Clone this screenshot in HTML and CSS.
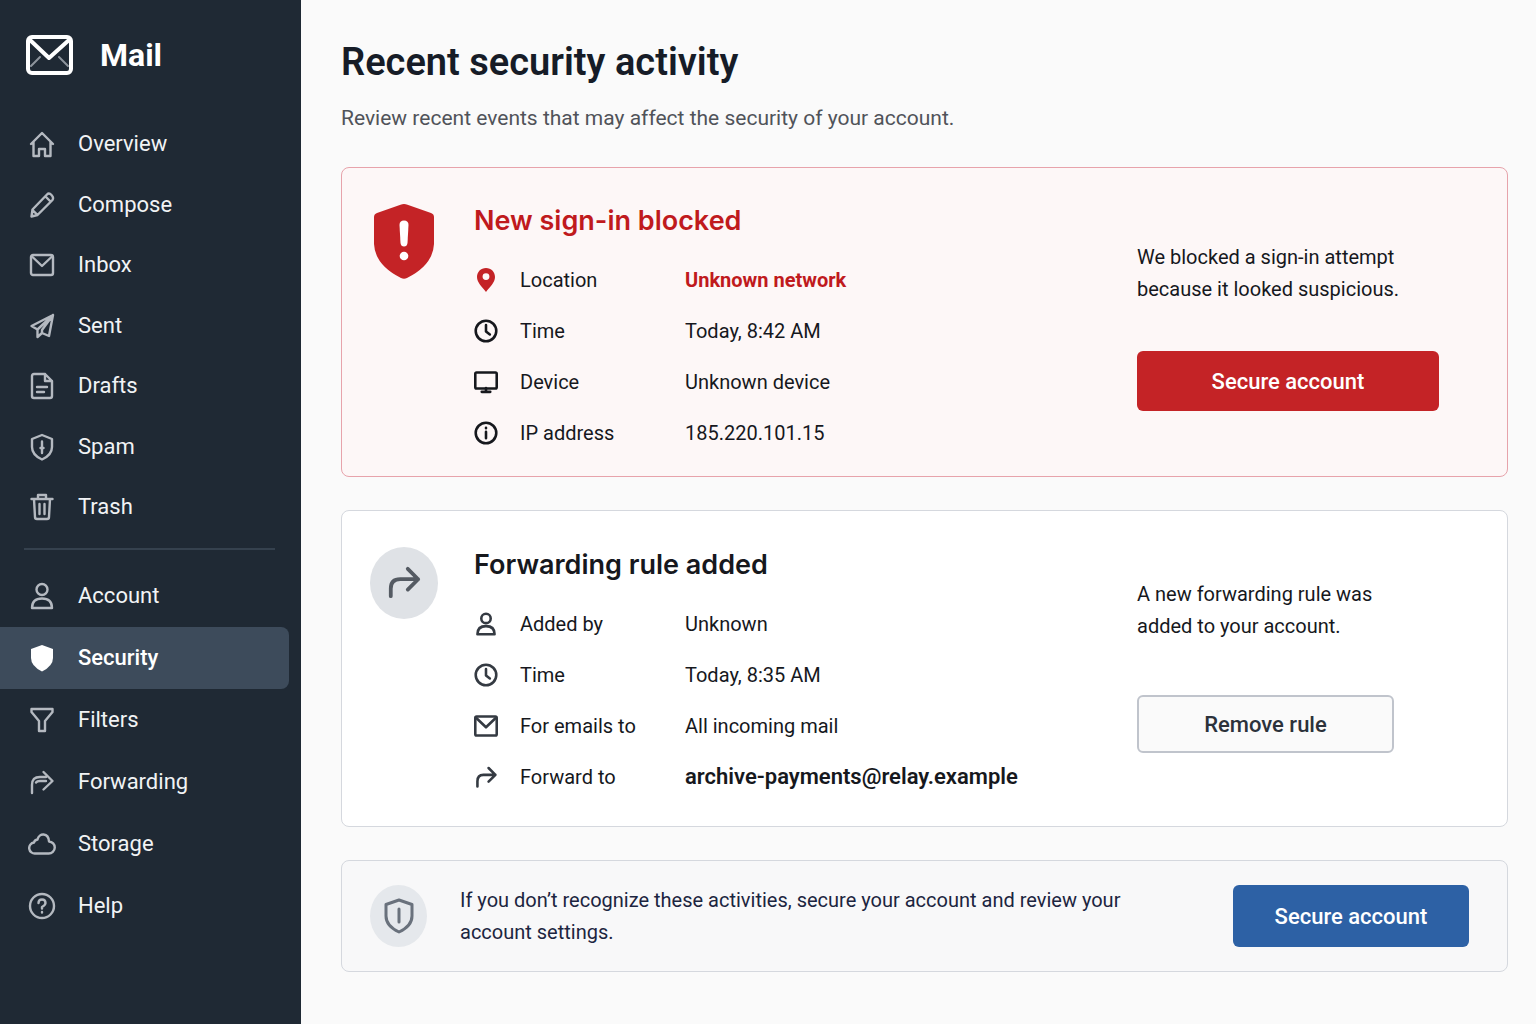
FILE: index.html
```html
<!DOCTYPE html>
<html lang="en">
<head>
    <meta charset="utf-8">
    <meta name="viewport" content="width=device-width, initial-scale=1">
    <title>Mail - Recent security activity</title>
    <link rel="stylesheet" href="styles.css">
</head>
<body>
    <!-- Icons used more than once -->
    <svg class="sprite" aria-hidden="true">
        <symbol id="icon-mail" viewBox="0 0 28 28">
            <rect x="3" y="4" width="22" height="20" rx="2"/>
            <path d="M4 5.500L14 15L24 5.500"/>
        </symbol>
        <symbol id="icon-user" viewBox="0 0 28 28">
            <circle cx="14" cy="7.500" r="5.500"/>
            <path d="M4 26C4 19.500 8 16.500 14 16.500S24 19.500 24 26Z"/>
        </symbol>
        <symbol id="icon-clock" viewBox="0 0 28 28">
            <circle cx="14" cy="14" r="12"/>
            <path d="M14 7V14.500L18.500 18"/>
        </symbol>
        <symbol id="icon-forward" viewBox="0 0 36 36">
            <path d="M4 32V24Q4 14 14 14H33M22 3L33 14L22 25"/>
        </symbol>
    </svg>

    <div class="app">
        <aside class="sidebar">
            <a class="brand" href="#">
                <svg class="brand-icon" viewBox="0 0 48 40">
                    <rect x="3" y="2" width="43" height="36" rx="4"/>
                    <path d="M5 5L24 23L44 5"/>
                    <path class="faint" d="M6 31L15 22M43 31L34 22"/>
                </svg>
                Mail
            </a>

            <nav>
                <ul class="nav-list nav-mail">
                    <li><a href="#"><svg class="icon" viewBox="0 0 28 28"><path d="M3 14L14 3L25 14M5.500 12V26H11V19H17V26H22.500V12"/></svg>Overview</a></li>
                    <li><a href="#"><svg class="icon" viewBox="0 0 28 28"><path d="M3.500 25.500L4.500 18.500L19 3.500Q21 1.500 23.500 4T24.500 9L9.500 24ZM17.500 5.500L22.500 10.500M4.500 19L9.500 24"/></svg>Compose</a></li>
                    <li><a href="#"><svg class="icon"><use href="#icon-mail"/></svg>Inbox</a></li>
                    <li><a href="#"><svg class="icon" viewBox="0 0 28 28"><path d="M25 3L3.500 14L9.500 17.500V25L14 21L21 24ZM25 3L9.500 17.500M25 3L14 18V21"/></svg>Sent</a></li>
                    <li><a href="#"><svg class="icon" viewBox="0 0 28 28"><path d="M17 2H6Q4 2 4 4V24Q4 26 6 26H22Q24 26 24 24V9ZM17 2V9H24M9 15H19M9 20H16"/></svg>Drafts</a></li>
                    <li><a href="#"><svg class="icon" viewBox="0 0 28 28"><path d="M14 2L24 6V14Q24 22 14 26.500Q4 22 4 14V6ZM14 8.500V20M12.500 15H15.500"/></svg>Spam</a></li>
                    <li><a href="#"><svg class="icon" viewBox="0 0 28 28"><path d="M3.500 6H24.500M10 6V2H18V6M6 6L7 24Q7 26 9 26H19Q21 26 21 24L22 6M11.500 11V21M16.500 11V21"/></svg>Trash</a></li>
                </ul>
                <hr class="nav-divider">
                <ul class="nav-list nav-settings">
                    <li><a href="#"><svg class="icon"><use href="#icon-user"/></svg>Account</a></li>
                    <li><a class="active" href="#" aria-current="page"><svg class="icon solid" viewBox="0 0 28 28"><path d="M14 1L25 5V14Q25 22 14 27.500Q3 22 3 14V5Z"/></svg>Security</a></li>
                    <li><a href="#"><svg class="icon" viewBox="0 0 28 28"><path d="M3.500 3H24.500V6L17 15V25H11V15L3.500 6Z"/></svg>Filters</a></li>
                    <li><a href="#"><svg class="icon" viewBox="0 0 28 28"><path d="M4 25V17Q4 9 12 9H18M8 14.500Q9 13 12 13H18M15.500 4L24.500 13L15.500 21.500"/></svg>Forwarding</a></li>
                    <li><a href="#"><svg class="icon" viewBox="0 0 28 28"><path d="M7.500 23.500A5.500 5.500 0 0 1 6 12.500Q6.500 10 9.500 9.500C11 2.500 20.500 2.500 21 11.500A6 6 0 0 1 20.500 23.500Z"/></svg>Storage</a></li>
                    <li><a href="#"><svg class="icon" viewBox="0 0 28 28"><circle cx="14" cy="14" r="12"/><path d="M10.500 11Q10.500 7.500 14 7.500T17.500 11Q17.500 13 14 15V16.500M14 20V20.500"/></svg>Help</a></li>
                </ul>
            </nav>
        </aside>

        <main class="content">
            <h1>Recent security activity</h1>
            <p class="subtitle">Review recent events that may affect the security of your account.</p>

            <section class="card card-alert">
                <svg class="alert-icon" viewBox="0 0 60 76">
                    <path class="shield" d="M26.500 1.800Q30 0 33.500 1.800L57 10Q60 11 60 14V41Q59 62 33 75Q30 76.500 27 75Q1 62 0 41V14Q0 11 3 10Z"/>
                    <path class="mark" d="M25.500 22Q25.500 17.500 30 17.500T34.500 22L33.500 40Q33 43.500 30 43.500T26.500 40Z"/>
                    <circle class="mark" cx="30" cy="53" r="4.300"/>
                </svg>
                <div class="card-body">
                    <h2>New sign-in blocked</h2>
                    <dl class="details">
                        <div>
                            <svg class="icon pin" viewBox="0 0 28 28"><path fill-rule="evenodd" d="M14 0C8 0 3.500 4.500 3.500 10.500C3.500 17 9.500 22 14 28C18.500 22 24.500 17 24.500 10.500C24.500 4.500 20 0 14 0ZM14 6A4 4 0 1 1 14 14A4 4 0 1 1 14 6Z"/></svg>
                            <dt>Location</dt>
                            <dd class="danger">Unknown network</dd>
                        </div>
                        <div>
                            <svg class="icon"><use href="#icon-clock"/></svg>
                            <dt>Time</dt>
                            <dd>Today, 8:42 AM</dd>
                        </div>
                        <div>
                            <svg class="icon" viewBox="0 0 28 28"><rect x="1.500" y="3" width="25" height="18.500" rx="1.500"/><path d="M14 21V25M9 25.500H19"/></svg>
                            <dt>Device</dt>
                            <dd>Unknown device</dd>
                        </div>
                        <div>
                            <svg class="icon" viewBox="0 0 28 28"><circle cx="14" cy="14" r="12"/><path d="M14 12.500V20M14 8V8.500"/></svg>
                            <dt>IP address</dt>
                            <dd>185.220.101.15</dd>
                        </div>
                    </dl>
                </div>
                <div class="card-side">
                    <p>We blocked a sign-in attempt<br>because it looked suspicious.</p>
                    <button type="button" class="btn btn-danger">Secure account</button>
                </div>
            </section>

            <section class="card card-rule">
                <span class="round-icon">
                    <svg><use href="#icon-forward"/></svg>
                </span>
                <div class="card-body">
                    <h2>Forwarding rule added</h2>
                    <dl class="details">
                        <div>
                            <svg class="icon"><use href="#icon-user"/></svg>
                            <dt>Added by</dt>
                            <dd>Unknown</dd>
                        </div>
                        <div>
                            <svg class="icon"><use href="#icon-clock"/></svg>
                            <dt>Time</dt>
                            <dd>Today, 8:35 AM</dd>
                        </div>
                        <div>
                            <svg class="icon" viewBox="0 0 28 28"><rect x="1.500" y="3" width="25" height="22" rx="1.500"/><path d="M3 5L14 15.500L25 5"/></svg>
                            <dt>For emails to</dt>
                            <dd>All incoming mail</dd>
                        </div>
                        <div>
                            <svg class="icon" viewBox="0 0 28 28"><path d="M4 25V19Q4 11.500 11 11.500H25M17 3.500L25 11.500L17 19.500"/></svg>
                            <dt>Forward to</dt>
                            <dd class="strong">archive-payments@relay.example</dd>
                        </div>
                    </dl>
                </div>
                <div class="card-side">
                    <p>A new forwarding rule was<br>added to your account.</p>
                    <button type="button" class="btn btn-outline">Remove rule</button>
                </div>
            </section>

            <section class="notice">
                <span class="round-icon round-icon-small">
                    <svg viewBox="0 0 36 36"><path d="M18 2L31 6.500V18Q31 28 18 34Q5 28 5 18V6.500ZM18 11V24"/></svg>
                </span>
                <p>If you don’t recognize these activities, secure your account and review your account settings.</p>
                <button type="button" class="btn btn-primary">Secure account</button>
            </section>
        </main>
    </div>
</body>
</html>
```

FILE: styles.css
```css
* {
    box-sizing: border-box;
}

body {
    margin: 0;
    font-family: Roboto, Arial, sans-serif;
    font-size: 20px;
    line-height: 32px;
    color: #16181d;
    background-color: #fafafa;
}

h1, h2, p, ul, dl, dd {
    margin: 0;
    padding: 0;
}

.sprite {
    display: none;
}

svg {
    flex-shrink: 0;
    fill: none;
    stroke: currentColor;
    stroke-width: 2;
    stroke-linecap: round;
    stroke-linejoin: round;
}

.app {
    display: flex;
    min-height: 100vh;
}

/* Sidebar */
.sidebar {
    flex: 0 0 301px;
    padding-top: 35px;
    background-color: #1f2934;
    color: #f1f3f5;
}

.brand {
    display: flex;
    align-items: center;
    gap: 27px;
    padding-left: 25px;
    margin-bottom: 39px;
    font-size: 32px;
    line-height: 40px;
    font-weight: 700;
    color: #ffffff;
    text-decoration: none;
}

.brand-icon {
    width: 48px;
    height: 40px;
    stroke-width: 4;
}

.brand-icon .faint {
    stroke: #8d949c;
    stroke-width: 2;
}

.nav-list {
    display: flex;
    flex-direction: column;
    justify-content: space-between;
    list-style: none;
    font-size: 22px;
}

.nav-list a {
    display: flex;
    align-items: center;
    gap: 22px;
    margin-right: 12px;
    padding-left: 28px;
    color: inherit;
    text-decoration: none;
}

.nav-mail {
    min-height: 423px;
}

.nav-mail a {
    height: 60px;
}

.nav-settings a {
    height: 62px;
}

.nav-list .icon {
    width: 28px;
    height: 28px;
    stroke-width: 2.4;
    color: #b4b9c0;
}

.nav-list .active {
    background-color: #3d4b5b;
    border-radius: 0 8px 8px 0;
    color: #ffffff;
    font-weight: 500;
}

.nav-list .solid {
    fill: #ffffff;
    stroke: none;
}

.nav-divider {
    height: 2px;
    margin: 11px 26px 15px 24px;
    border: 0;
    background-color: #35414e;
}

/* Main column */
.content {
    flex: 1;
    min-width: 0;
    padding: 38px 28px 38px 40px;
}

h1 {
    font-size: 38px;
    line-height: 48px;
    font-weight: 600;
    color: #161c27;
}

.subtitle {
    margin-top: 16px;
    margin-bottom: 33px;
    font-size: 21px;
    color: #505359;
}

.card {
    display: grid;
    grid-template-columns: 68px 1fr 330px;
    column-gap: 36px;
    align-items: start;
    margin-bottom: 33px;
    padding: 35px 40px 18px 28px;
    border: 1px solid #d5d8de;
    border-radius: 8px;
    background-color: #ffffff;
}

.card-alert {
    border-color: #e7a3ab;
    background-color: #fdf7f7;
}

.card-rule {
    padding-top: 36px;
    padding-bottom: 24px;
}

.card h2 {
    font-family: Inter, Arial, sans-serif;
    font-size: 27px;
    line-height: 36px;
    font-weight: 600;
}

.card-alert h2,
.details .danger {
    color: #c01a1d;
}

.alert-icon {
    justify-self: center;
    width: 60px;
    height: 76px;
    stroke: none;
}

.shield {
    fill: #c42326;
}

.mark {
    fill: #ffffff;
}

.details {
    margin-top: 15px;
}

.details div {
    display: grid;
    grid-template-columns: 24px 143px 1fr;
    column-gap: 22px;
    align-items: center;
    height: 51px;
}

.details .icon {
    width: 24px;
    height: 24px;
    stroke-width: 3;
}

.card-rule .icon {
    color: #343a42;
}

.details .pin {
    fill: #c42326;
    stroke: none;
}

.details .danger {
    font-weight: 700;
}

.details .strong {
    font-size: 22px;
    font-weight: 600;
}

.card-side {
    padding-top: 38px;
}

.card-rule .card-side {
    padding-top: 31px;
}

.card-side .btn {
    margin-top: 46px;
}

.card-rule .btn {
    margin-top: 53px;
}

.round-icon {
    display: flex;
    align-items: center;
    justify-content: center;
    width: 68px;
    height: 72px;
    border-radius: 50%;
    background-color: #dfe2e6;
    color: #555b63;
}

.round-icon svg {
    width: 34px;
    height: 34px;
    stroke-width: 4;
}

.round-icon-small {
    flex-shrink: 0;
    width: 57px;
    height: 62px;
    background-color: #e5e8ec;
    color: #69717c;
}

.round-icon-small svg {
    width: 36px;
    height: 36px;
    stroke-width: 3;
}

/* Buttons */
.btn {
    display: block;
    height: 60px;
    border: 0;
    border-radius: 6px;
    font-family: inherit;
    font-size: 22px;
    font-weight: 500;
    color: #ffffff;
    cursor: pointer;
}

.btn-danger {
    width: 302px;
    background-color: #c42326;
}

.btn-outline {
    width: 257px;
    height: 58px;
    border: 2px solid #c0c4cc;
    background-color: #fafafa;
    color: #2c323b;
}

.btn-primary {
    flex-shrink: 0;
    width: 236px;
    height: 62px;
    margin-left: auto;
    background-color: #2d61a5;
}

.btn:hover {
    filter: brightness(0.95);
}

/* Bottom notice */
.notice {
    display: flex;
    align-items: center;
    gap: 33px;
    padding: 23px 38px 23px 28px;
    border: 1px solid #d5d8de;
    border-radius: 8px;
    background-color: #f8f8f9;
    color: #1c2540;
}

.notice p {
    max-width: 700px;
}
```
